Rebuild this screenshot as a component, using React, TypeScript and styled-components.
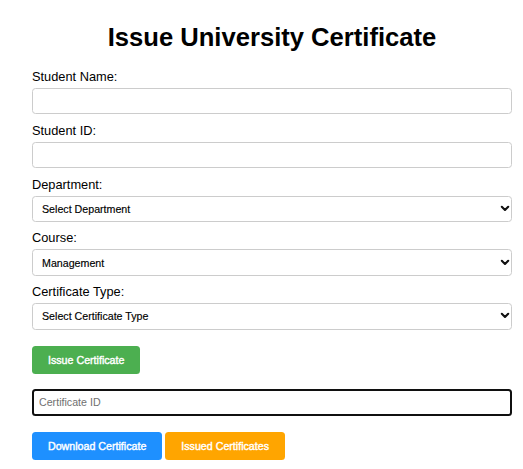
import React from "react";
import styled, { createGlobalStyle } from "styled-components";

const GlobalStyle = createGlobalStyle`
  html, body {
    margin: 0;
    padding: 0;
    background: #ffffff;
  }
  body {
    font-family: "Liberation Sans", Arial, sans-serif;
    color: #000;
  }
  * { box-sizing: border-box; }
`;

const Page = styled.div`
  width: 480px;
  margin-left: 32px;
  padding-top: 23px;
  display: flex;
  flex-direction: column;
`;

const Title = styled.h1`
  margin: 0 0 18.5px 0;
  font-size: 25.6px;
  line-height: 28.6px;
  font-weight: 700;
  text-align: center;
  color: #000;
`;

const Field = styled.div`
  display: flex;
  flex-direction: column;
  margin-bottom: 9.4px;
`;

const Label = styled.label`
  font-size: 12.8px;
  line-height: 14.4px;
  margin-bottom: 3.6px;
  color: #000;
`;

const TextInput = styled.input<{ $focused?: boolean }>`
  width: 100%;
  height: ${(p) => (p.$focused ? "27px" : "26.4px")};
  border: ${(p) => (p.$focused ? "2px solid #101010" : "1px solid #cccccc")};
  border-radius: 3.5px;
  padding: 0 ${(p) => (p.$focused ? "5px" : "6px")};
  font-family: "Liberation Sans", Arial, sans-serif;
  font-size: 10.67px;
  color: #000;
  background: #fff;
  outline: none;
  &::placeholder {
    color: #707070;
  }
`;

const SelectWrap = styled.div`
  position: relative;
  width: 100%;
`;

const Select = styled.select`
  appearance: none;
  -webkit-appearance: none;
  width: 100%;
  height: 26.4px;
  border: 1px solid #cccccc;
  border-radius: 3.5px;
  padding: 0 24px 0 9px;
  font-family: "Liberation Sans", Arial, sans-serif;
  font-size: 10.67px;
  -webkit-text-stroke: 0.15px #000;
  color: #000;
  background: #fff;
  outline: none;
`;

const Chevron = styled.svg`
  position: absolute;
  right: 3px;
  top: 50%;
  width: 8px;
  height: 5px;
  margin-top: -3px;
  pointer-events: none;
  overflow: visible;
`;

const Button = styled.button<{ $color: string }>`
  height: 28px;
  padding: 0 16px;
  border: none;
  border-radius: 3.5px;
  background: ${(p) => p.$color};
  color: #fff;
  font-family: "Liberation Sans", Arial, sans-serif;
  font-size: 10.67px;
  -webkit-text-stroke: 0.4px #fff;
  cursor: pointer;
`;

const IssueRow = styled.div`
  display: flex;
  margin-top: 6.5px;
  margin-bottom: 15px;
`;

const IdRow = styled.div`
  display: flex;
  margin-bottom: 16px;
`;

const ActionRow = styled.div`
  display: flex;
  gap: 3px;
`;

const ArrowIcon = () => (
  <Chevron viewBox="0 0 8 5">
    <polyline
      points="0.8,0.8 4,4 7.2,0.8"
      fill="none"
      stroke="#111"
      strokeWidth="2.1"
      strokeLinecap="round"
      strokeLinejoin="round"
    />
  </Chevron>
);

const SelectField = ({
  label,
  value,
  options,
}: {
  label: string;
  value: string;
  options: string[];
}) => (
  <Field>
    <Label>{label}</Label>
    <SelectWrap>
      <Select defaultValue={value}>
        {options.map((o) => (
          <option key={o} value={o}>
            {o}
          </option>
        ))}
      </Select>
      <ArrowIcon />
    </SelectWrap>
  </Field>
);

export default function App() {
  return (
    <>
      <GlobalStyle />
      <Page>
        <Title>Issue University Certificate</Title>
        <Field>
          <Label>Student Name:</Label>
          <TextInput type="text" />
        </Field>
        <Field>
          <Label>Student ID:</Label>
          <TextInput type="text" />
        </Field>
        <SelectField
          label="Department:"
          value="Select Department"
          options={["Select Department", "Engineering", "Science", "Arts"]}
        />
        <SelectField
          label="Course:"
          value="Management"
          options={["Management", "Computer Science", "Physics"]}
        />
        <SelectField
          label="Certificate Type:"
          value="Select Certificate Type"
          options={["Select Certificate Type", "Degree", "Diploma"]}
        />
        <IssueRow>
          <Button $color="#4caf50">Issue Certificate</Button>
        </IssueRow>
        <IdRow>
          <TextInput $focused type="text" placeholder="Certificate ID" />
        </IdRow>
        <ActionRow>
          <Button $color="#1e90ff">Download Certificate</Button>
          <Button $color="#ffa500">Issued Certificates</Button>
        </ActionRow>
      </Page>
    </>
  );
}
